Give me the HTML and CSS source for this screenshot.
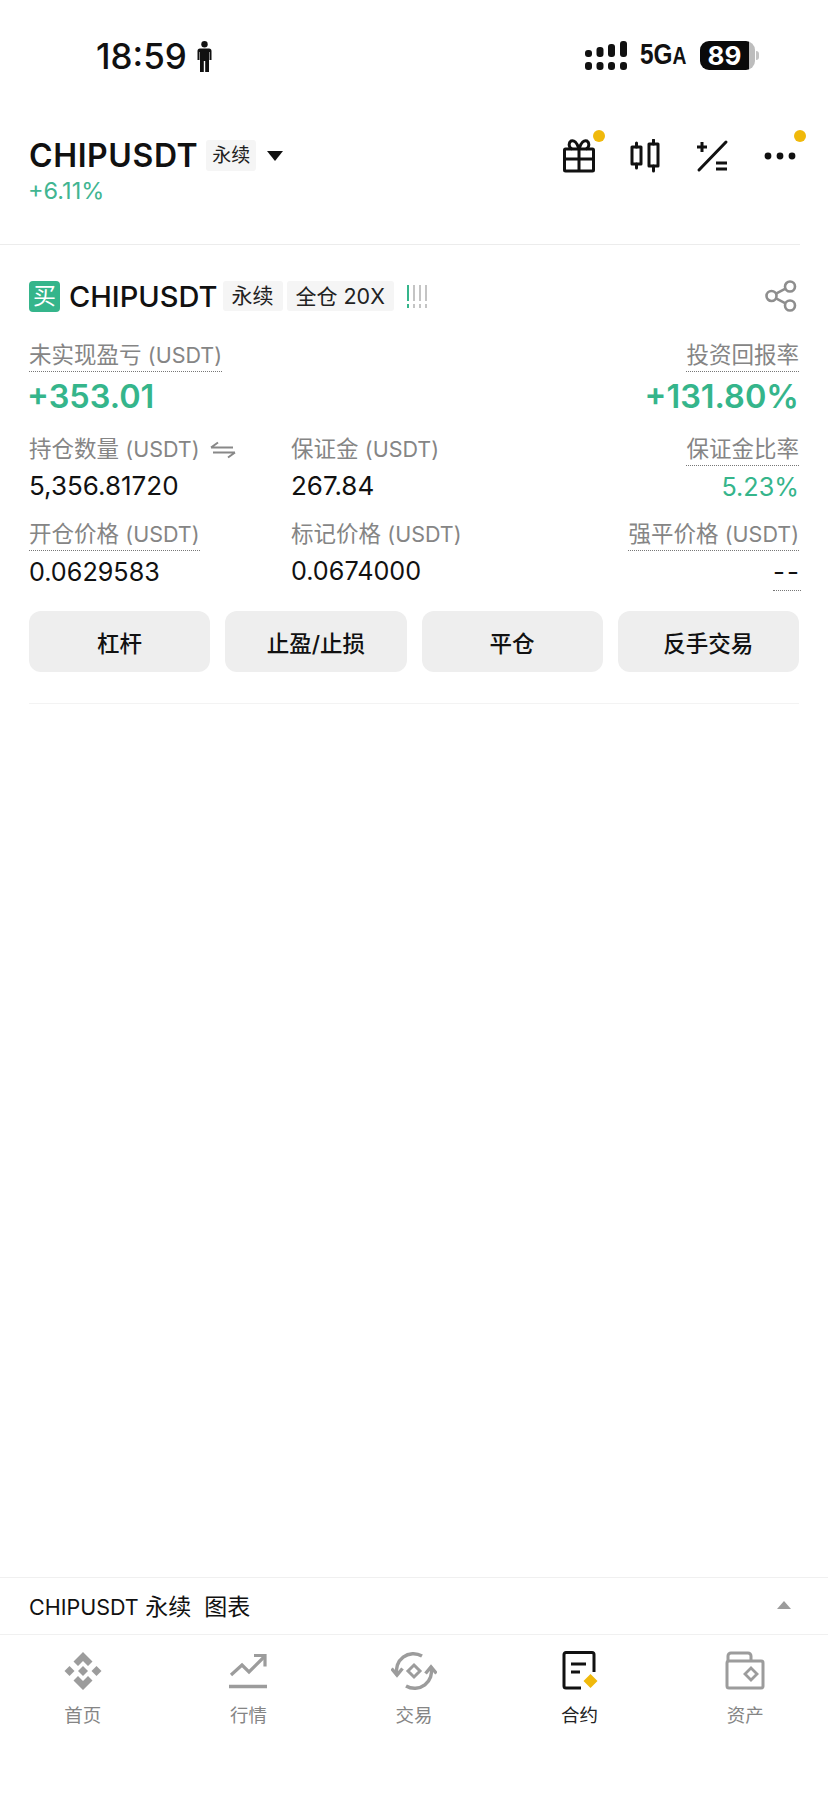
FILE: index.html
```html
<!DOCTYPE html>
<html lang="zh">
<head>
<meta charset="utf-8">
<title>CHIPUSDT</title>
<link rel="stylesheet" href="styles.css">
</head>
<body>
<div class="page">
  <header class="status">
    <div class="status-left">
      <span class="time">18:59</span>
      <svg class="person" viewBox="0 0 15 31"><circle cx="7.5" cy="3.2" r="3.2"/><path d="M3 7.500h9a2.500 2.500 0 0 1 2.500 2.500v9h-2v-8h-.5v20H8.200V20H6.800V31H3V11h-.5v8h-2v-9A2.500 2.500 0 0 1 3 7.500z"/></svg>
    </div>
    <div class="status-right">
      <svg class="signal" viewBox="0 0 42 29"><rect x="0" y="9" width="7" height="7" rx="3"/><rect x="11.500" y="6" width="7" height="10" rx="3"/><rect x="23" y="3" width="7" height="13" rx="3"/><rect x="35" y="0" width="7" height="16" rx="3"/><rect x="0" y="21" width="7" height="8" rx="3"/><rect x="11.500" y="21" width="7" height="8" rx="3"/><rect x="23" y="21" width="7" height="8" rx="3"/><rect x="35" y="21" width="7" height="8" rx="3"/></svg>
      <span class="net">5G<small>A</small></span>
      <span class="battery"><span class="batt-fill">89</span><span class="batt-rest"></span></span>
      <span class="batt-nub"></span>
    </div>
  </header>

  <section class="title-bar">
    <div>
      <div class="title-row">
        <span class="title">CHIPUSDT</span>
        <span class="tag tag-lg">永续</span>
        <span class="caret"></span>
      </div>
      <div class="change">+6.11%</div>
    </div>
    <div class="tools">
      <span class="tool">
        <svg viewBox="0 0 34 34" fill="none" stroke="#111" stroke-width="3" stroke-linejoin="round"><rect x="2.500" y="10" width="29" height="22" rx="1"/><path d="M2.500 20h29M17 10v22"/><path d="M17 10c-2-7-5-9-8-8-3 2-2 7 1 8M17 10c2-7 5-9 8-8 3 2 2 7-1 8"/></svg>
        <i class="dot"></i>
      </span>
      <span class="tool">
        <svg viewBox="0 0 34 34" fill="none" stroke="#111" stroke-width="3" stroke-linecap="round" stroke-linejoin="round"><rect x="3" y="8" width="9" height="17"/><path d="M7.500 4v4M7.500 25v4"/><rect x="20" y="5" width="9" height="22"/><path d="M24.500 1v4M24.500 27v5"/></svg>
      </span>
      <span class="tool">
        <svg viewBox="0 0 34 34" fill="none" stroke="#111" stroke-width="3" stroke-linecap="round"><path d="M3 31L30 3"/><path d="M1 8h10M6 3v10" stroke-linecap="butt"/><path d="M20 24h11M20 30h11" stroke-linecap="butt"/></svg>
      </span>
      <span class="tool">
        <svg viewBox="0 0 34 34" fill="#111"><circle cx="5" cy="17" r="3.400"/><circle cx="17" cy="17" r="3.400"/><circle cx="29" cy="17" r="3.400"/></svg>
        <i class="dot"></i>
      </span>
    </div>
  </section>

  <section class="position">
    <div class="pos-head">
      <span class="buy">买</span>
      <span class="symbol">CHIPUSDT</span>
      <span class="tag">永续</span>
      <span class="tag">全仓 <span class="unit">20X</span></span>
      <span class="bars"><i class="on"></i><i></i><i></i><i></i></span>
      <svg class="share" viewBox="0 0 32 32" fill="none" stroke="#8e8e8e" stroke-width="2.600"><circle cx="25" cy="6.500" r="5"/><circle cx="6.500" cy="16" r="5"/><circle cx="25" cy="25.500" r="5"/><path d="M11 13.700l9.500-5M11 18.300l9.500 5"/></svg>
    </div>

    <div class="pnl">
      <div>
        <span class="label dotted">未实现盈亏 <span class="unit">(USDT)</span></span>
        <div class="big green shift">+353.01</div>
      </div>
      <div class="right">
        <span class="label dotted">投资回报率</span>
        <div class="big green">+131.80%</div>
      </div>
    </div>

    <div class="grid">
      <div class="cell">
        <span class="label">持仓数量 <span class="unit">(USDT)</span>
          <svg class="swap" viewBox="0 0 26 18" fill="none" stroke="#888" stroke-width="2"><path d="M1 6.500h22M1 6.500l7-5M25 11.500H3M25 11.500l-7 5"/></svg>
        </span>
        <div class="value">5,356.81720</div>
      </div>
      <div class="cell">
        <span class="label">保证金 <span class="unit">(USDT)</span></span>
        <div class="value">267.84</div>
      </div>
      <div class="cell right">
        <span class="label dotted">保证金比率</span>
        <div class="value sm green">5.23%</div>
      </div>
      <div class="cell">
        <span class="label dotted">开仓价格 <span class="unit">(USDT)</span></span>
        <div class="value sm">0.0629583</div>
      </div>
      <div class="cell">
        <span class="label">标记价格 <span class="unit">(USDT)</span></span>
        <div class="value sm">0.0674000</div>
      </div>
      <div class="cell right">
        <span class="label dotted">强平价格 <span class="unit">(USDT)</span></span>
        <div class="value"><span class="dotted dash">--</span></div>
      </div>
    </div>

    <div class="actions">
      <button class="btn">杠杆</button>
      <button class="btn">止盈/止损</button>
      <button class="btn">平仓</button>
      <button class="btn">反手交易</button>
    </div>
  </section>

  <div class="spacer"></div>

  <section class="chart-bar">
    <span><span class="chart-sym">CHIPUSDT</span> 永续&nbsp; 图表</span>
    <span class="caret-up"></span>
  </section>

  <nav class="nav">
    <a class="nav-item">
      <svg viewBox="0 0 40 40" fill="#9c9c9c"><path d="M20 1l9.500 9.500-4.500 4.500-5-5-5 5-4.500-4.500z"/><path d="M20 39l-9.500-9.500 4.500-4.500 5 5 5-5 4.500 4.500z"/><path d="M20 15l5 5-5 5-5-5z"/><path d="M6.500 15l5 5-5 5-5-5z"/><path d="M33.500 15l5 5-5 5-5-5z"/></svg>
      <span>首页</span>
    </a>
    <a class="nav-item">
      <svg viewBox="0 0 40 40" fill="none" stroke="#9c9c9c" stroke-width="3.200"><path d="M3 24l11-10 7 7L36 6"/><path d="M26 4.500h11v11"/><path d="M1 35.500h38" stroke-width="3.400"/></svg>
      <span>行情</span>
    </a>
    <a class="nav-item">
      <svg viewBox="0 0 46 40" fill="none" stroke="#9c9c9c" stroke-width="3.400"><path d="M6 24A17 17 0 0 1 31 5"/><path d="M40 16A17 17 0 0 1 15 35"/><path d="M0.500 17.500L6 24l5.500-6.500"/><path d="M34.500 22.500L40 16l5.500 6.500"/><path d="M23 14l6 6-6 6-6-6z" stroke-width="3"/></svg>
      <span>交易</span>
    </a>
    <a class="nav-item active">
      <svg viewBox="0 0 40 40" fill="none" stroke="#111" stroke-width="3"><path d="M21 37H6a2 2 0 0 1-2-2V3.500a2 2 0 0 1 2-2h26a2 2 0 0 1 2 2V21"/><path d="M11 13h15M11 21h9" stroke-width="3"/><path d="M30.500 23l7 7-7 7-7-7z" fill="#f0b90b" stroke="none"/></svg>
      <span>合约</span>
    </a>
    <a class="nav-item">
      <svg viewBox="0 0 40 40" fill="none" stroke="#9c9c9c" stroke-width="3"><path d="M3 11V5a3 3 0 0 1 3-3h17a3 3 0 0 1 3 3v6"/><rect x="2" y="10" width="36" height="27" rx="2"/><path d="M26 17l6 6-6 6-6-6z" stroke-width="2.800"/></svg>
      <span>资产</span>
    </a>
  </nav>
</div>
</body>
</html>
```
FILE: styles.css
```css
* { box-sizing: border-box; }
html, body { margin: 0; padding: 0; }
body {
  background: #fff;
  color: #111;
  font-family: Inter, "Noto Sans CJK SC", "Noto Sans", sans-serif;
}
.page {
  width: 828px;
  height: 1795px;
  display: flex;
  flex-direction: column;
  overflow: hidden;
}

/* status bar */
.status {
  height: 88px;
  padding: 41px 69px 0 96px;
  display: flex;
  justify-content: space-between;
  align-items: flex-start;
}
.status-left { display: flex; align-items: center; gap: 10px; }
.time { font-size: 35px; line-height: 31px; font-weight: 500; color: #111; }
.person { width: 15px; height: 31px; fill: #111; }
.status-right { display: flex; align-items: center; height: 29px; }
.signal { width: 42px; height: 29px; fill: #111; margin-right: 13px; }
.net { font-family: "Liberation Sans", sans-serif; font-size: 29px; line-height: 29px; font-weight: 700; width: 60px; transform: scaleX(.84); transform-origin: left center; }
.net small { font-size: 23px; }
.battery { display: flex; width: 55px; height: 29px; border-radius: 9px; overflow: hidden; }
.batt-fill { width: 49px; background: #0a0a0a; color: #fff; font-size: 26px; font-weight: 700; line-height: 29px; text-align: center; }
.batt-rest { flex: 1; background: #bdbdbd; }
.batt-nub { width: 3px; height: 9px; margin-left: 1px; background: #c4c4c4; border-radius: 0 3px 3px 0; }

/* title bar */
.title-bar {
  height: 157px;
  border-bottom: 1px solid #ececec;
  margin-right: 28px;
  padding: 52px 3px 0 29px;
  display: flex;
  justify-content: space-between;
  align-items: flex-start;
}
.title-row { display: flex; align-items: center; height: 31px; }
.title { font-size: 32px; font-weight: 600; line-height: 31px; letter-spacing: .6px; }
.tag {
  background: #f5f5f5;
  color: #222;
  font-size: 21px;
  line-height: 30px;
  height: 30px;
  padding: 0 9px;
  border-radius: 3px;
  margin-left: 4px;
  white-space: nowrap;
}
.tag-lg { margin-left: 8px; padding: 0 6px; font-size: 19px; height: 31px; line-height: 31px; }
.caret { width: 0; height: 0; margin-left: 11px; border: 8.500px solid transparent; border-top: 10px solid #111; border-bottom: 0; }
.change { color: #41b591; font-size: 23.500px; line-height: 26px; margin-top: 7px; margin-left: -1px; }
.tools { display: flex; gap: 33px; margin-top: -1px; }
.tool { position: relative; width: 34px; height: 34px; }
.tool svg { display: block; width: 34px; height: 34px; }
.dot { position: absolute; top: -9px; right: -9px; width: 12px; height: 12px; border-radius: 50%; background: #f0b90b; }

/* position card */
.position {
  margin: 35px 29px 0;
  padding-bottom: 31px;
  border-bottom: 1px solid #f3f3f3;
}
.pos-head { display: flex; align-items: center; height: 32px; }
.buy {
  width: 31px; height: 31px; border-radius: 4px;
  background: #35b58b; color: #fff;
  font-size: 23px; line-height: 31px; text-align: center;
  margin-right: 10px;
}
.symbol { font-size: 29px; font-weight: 500; margin-right: 1px; margin-left: -1px; }
.bars { display: flex; gap: 4px; margin-left: 13px; }
.bars i { width: 2px; height: 23px; background: linear-gradient(#c4c4c4 0 70%, transparent 70% 82%, #c4c4c4 82%); }
.bars i.on { background: linear-gradient(#35b58b 0 70%, transparent 70% 82%, #35b58b 82%); }
.share { width: 32px; height: 32px; margin-left: auto; margin-right: 2px; }

.label { display: inline-block; color: #858585; font-size: 22.500px; line-height: 26px; white-space: nowrap; padding-bottom: 3px; }
.unit { font-size: 21.500px; }
.dotted { border-bottom: 1px dotted #777; }
.swap { width: 26px; height: 18px; margin-left: 4px; vertical-align: -2px; }
.right { text-align: right; }
.green { color: #35b58b; }
.pnl { display: flex; justify-content: space-between; margin-top: 30px; }
.big { font-size: 32.500px; font-weight: 600; line-height: 38px; margin-top: 6px; }
.big.shift { margin-left: -2px; }
.grid { display: grid; grid-template-columns: 262px 1fr 1fr; row-gap: 18px; margin-top: 20px; }
.value { font-size: 26px; line-height: 32px; margin-top: 5px; }
.value.sm { font-size: 25.200px; }
.dash { display: inline-block; line-height: 24px; padding-bottom: 6px; letter-spacing: 2px; margin-right: -2px; }
.actions { display: grid; grid-template-columns: repeat(4, 1fr); gap: 15px; margin-top: 20px; }
.btn {
  height: 61px;
  border: 0;
  border-radius: 12px;
  background: #eee;
  color: #111;
  font-family: inherit;
  font-size: 22.500px;
  font-weight: 500;
  padding: 0;
}

.spacer { flex: 1; }

/* chart bar */
.chart-bar {
  height: 58px;
  border-top: 1px solid #f0f0f0;
  border-bottom: 1px solid #f0f0f0;
  padding: 0 37px 3px 29px;
  display: flex;
  align-items: center;
  justify-content: space-between;
  font-size: 23px;
  color: #111;
}
.chart-sym { font-size: 21.500px; }
.caret-up { width: 0; height: 0; border: 7px solid transparent; border-bottom: 8px solid #9c9c9c; border-top: 0; }

/* nav */
.nav { height: 160px; display: grid; grid-template-columns: repeat(5, 1fr); padding-top: 16px; }
.nav-item { display: flex; flex-direction: column; align-items: center; color: #858585; font-size: 18.500px; line-height: 24px; }
.nav-item svg { height: 40px; width: 40px; margin-bottom: 12px; }
.nav-item:nth-child(3) svg { width: 46px; }
.nav-item.active { color: #222; }
```
